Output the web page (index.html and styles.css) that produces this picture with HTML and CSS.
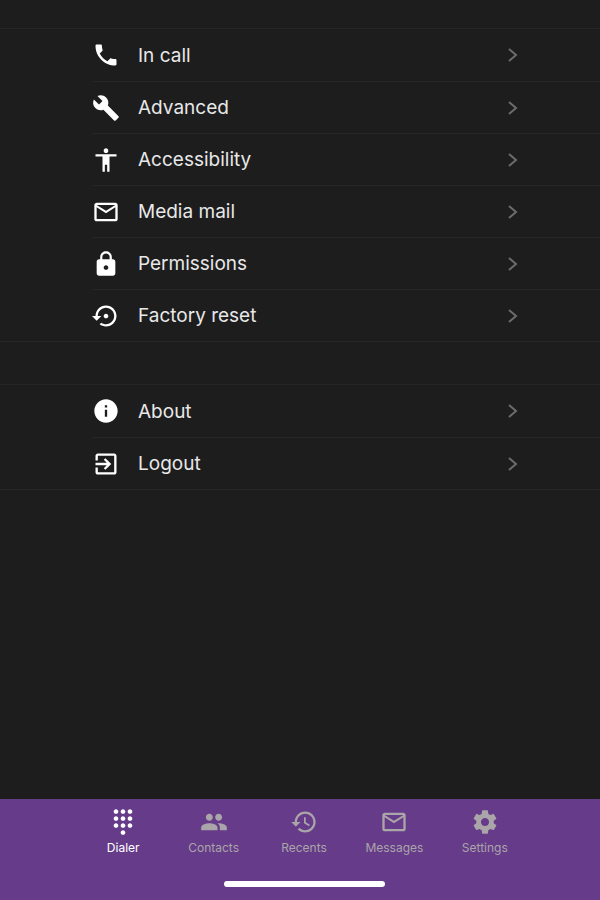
FILE: index.html
```html
<!DOCTYPE html>
<html lang="en">
<head>
    <meta charset="UTF-8">
    <meta name="viewport" content="width=device-width, initial-scale=1.0">
    <title>Settings</title>
    <link rel="stylesheet" href="styles.css">
</head>
<body>
    <main class="settings">
        <ul class="menu-group">
            <li><a class="menu-link" href="#in-call">
                <svg class="icon" viewBox="0 0 24 24"><path d="M6.62 10.79c1.44 2.83 3.76 5.14 6.59 6.59l2.2-2.2c.27-.27.67-.36 1.02-.24 1.12.37 2.33.57 3.57.57.55 0 1 .45 1 1V20c0 .55-.45 1-1 1-9.39 0-17-7.61-17-17 0-.55.45-1 1-1h3.5c.55 0 1 .45 1 1 0 1.25.2 2.45.57 3.57.11.35.03.74-.25 1.02l-2.2 2.2z"/></svg>
                <span class="menu-row">In call <svg class="chevron" viewBox="0 0 10 16"><path d="M1 2l7 6-7 6"/></svg></span>
            </a></li>
            <li><a class="menu-link" href="#advanced">
                <svg class="icon" viewBox="0 0 24 24"><path d="M22.7 19l-9.1-9.1c.9-2.3.4-5-1.5-6.9-2-2-5-2.4-7.4-1.3L9 6 6 9 1.6 4.7C.4 7.1.9 10.1 2.9 12.1c1.9 1.9 4.6 2.4 6.9 1.5l9.1 9.1c.4.4 1 .4 1.4 0l2.3-2.3c.5-.4.5-1.1.1-1.4z"/></svg>
                <span class="menu-row">Advanced <svg class="chevron" viewBox="0 0 10 16"><path d="M1 2l7 6-7 6"/></svg></span>
            </a></li>
            <li><a class="menu-link" href="#accessibility">
                <svg class="icon" viewBox="0 0 24 24"><path d="M12 2c1.1 0 2 .9 2 2s-.9 2-2 2-2-.9-2-2 .9-2 2-2zm9 7h-6v13h-2v-6h-2v6H9V9H3V7h18v2z"/></svg>
                <span class="menu-row">Accessibility <svg class="chevron" viewBox="0 0 10 16"><path d="M1 2l7 6-7 6"/></svg></span>
            </a></li>
            <li><a class="menu-link" href="#media-mail">
                <svg class="icon" viewBox="0 0 24 24"><path d="M20 4H4c-1.1 0-2 .9-2 2v12c0 1.1.9 2 2 2h16c1.1 0 2-.9 2-2V6c0-1.1-.9-2-2-2zm0 14H4V8l8 5 8-5v10zm-8-7L4 6h16l-8 5z"/></svg>
                <span class="menu-row">Media mail <svg class="chevron" viewBox="0 0 10 16"><path d="M1 2l7 6-7 6"/></svg></span>
            </a></li>
            <li><a class="menu-link" href="#permissions">
                <svg class="icon" viewBox="0 0 24 24"><path d="M18 8h-1V6c0-2.76-2.24-5-5-5S7 3.24 7 6v2H6c-1.1 0-2 .9-2 2v10c0 1.1.9 2 2 2h12c1.1 0 2-.9 2-2V10c0-1.1-.9-2-2-2zm-6 9c-1.1 0-2-.9-2-2s.9-2 2-2 2 .9 2 2-.9 2-2 2zm3.1-9H8.9V6c0-1.71 1.39-3.1 3.1-3.1 1.71 0 3.1 1.39 3.1 3.1v2z"/></svg>
                <span class="menu-row">Permissions <svg class="chevron" viewBox="0 0 10 16"><path d="M1 2l7 6-7 6"/></svg></span>
            </a></li>
            <li><a class="menu-link" href="#factory-reset">
                <svg class="icon" viewBox="0 0 24 24"><path d="M14 12c0-1.1-.9-2-2-2s-2 .9-2 2 .9 2 2 2 2-.9 2-2zm-2-9c-4.97 0-9 4.03-9 9H0l4 4 4-4H5c0-3.87 3.13-7 7-7s7 3.13 7 7-3.13 7-7 7c-1.51 0-2.91-.49-4.06-1.3l-1.42 1.44C8.04 20.3 9.94 21 12 21c4.97 0 9-4.03 9-9s-4.03-9-9-9z"/></svg>
                <span class="menu-row">Factory reset <svg class="chevron" viewBox="0 0 10 16"><path d="M1 2l7 6-7 6"/></svg></span>
            </a></li>
        </ul>

        <ul class="menu-group">
            <li><a class="menu-link" href="#about">
                <svg class="icon" viewBox="0 0 24 24"><path d="M12 2C6.48 2 2 6.48 2 12s4.48 10 10 10 10-4.48 10-10S17.52 2 12 2zm1 15h-2v-6h2v6zm0-8h-2V7h2v2z"/></svg>
                <span class="menu-row">About <svg class="chevron" viewBox="0 0 10 16"><path d="M1 2l7 6-7 6"/></svg></span>
            </a></li>
            <li><a class="menu-link" href="#logout">
                <svg class="icon" viewBox="0 0 24 24"><path d="M10.09 15.59L11.5 17l5-5-5-5-1.41 1.41L12.67 11H3v2h9.67l-2.58 2.59zM19 3H5c-1.11 0-2 .9-2 2v4h2V5h14v14H5v-4H3v4c0 1.1.89 2 2 2h14c1.1 0 2-.9 2-2V5c0-1.1-.9-2-2-2z"/></svg>
                <span class="menu-row">Logout <svg class="chevron" viewBox="0 0 10 16"><path d="M1 2l7 6-7 6"/></svg></span>
            </a></li>
        </ul>
    </main>

    <footer class="bottom-bar">
        <nav class="tabs">
            <a class="tab active" href="#dialer">
                <svg class="tab-icon" viewBox="0 0 24 24"><path d="M12 19c-1.1 0-2 .9-2 2s.9 2 2 2 2-.9 2-2-.9-2-2-2zM6 1c-1.1 0-2 .9-2 2s.9 2 2 2 2-.9 2-2-.9-2-2-2zm0 6c-1.1 0-2 .9-2 2s.9 2 2 2 2-.9 2-2-.9-2-2-2zm0 6c-1.1 0-2 .9-2 2s.9 2 2 2 2-.9 2-2-.9-2-2-2zm12-8c1.1 0 2-.9 2-2s-.9-2-2-2-2 .9-2 2 .9 2 2 2zm-6 8c-1.1 0-2 .9-2 2s.9 2 2 2 2-.9 2-2-.9-2-2-2zm6 0c-1.1 0-2 .9-2 2s.9 2 2 2 2-.9 2-2-.9-2-2-2zm0-6c-1.1 0-2 .9-2 2s.9 2 2 2 2-.9 2-2-.9-2-2-2zm-6 0c-1.1 0-2 .9-2 2s.9 2 2 2 2-.9 2-2-.9-2-2-2zm0-6c-1.1 0-2 .9-2 2s.9 2 2 2 2-.9 2-2-.9-2-2-2z"/></svg>
                Dialer
            </a>
            <a class="tab" href="#contacts">
                <svg class="tab-icon" viewBox="0 0 24 24"><path d="M16 11c1.66 0 2.99-1.34 2.99-3S17.66 5 16 5c-1.66 0-3 1.34-3 3s1.34 3 3 3zm-8 0c1.66 0 2.99-1.34 2.99-3S9.66 5 8 5C6.34 5 5 6.34 5 8s1.34 3 3 3zm0 2c-2.33 0-7 1.17-7 3.5V19h14v-2.5c0-2.33-4.67-3.5-7-3.5zm8 0c-.29 0-.62.02-.97.05 1.16.84 1.97 1.97 1.97 3.45V19h6v-2.5c0-2.33-4.67-3.5-7-3.5z"/></svg>
                Contacts
            </a>
            <a class="tab" href="#recents">
                <svg class="tab-icon" viewBox="0 0 24 24"><path d="M13 3c-4.97 0-9 4.03-9 9H1l3.89 3.89.07.14L9 12H6c0-3.87 3.13-7 7-7s7 3.13 7 7-3.13 7-7 7c-1.93 0-3.68-.79-4.94-2.06l-1.42 1.42C8.27 19.99 10.51 21 13 21c4.97 0 9-4.03 9-9s-4.03-9-9-9zm-1 5v5l4.28 2.54.72-1.21-3.5-2.08V8H12z"/></svg>
                Recents
            </a>
            <a class="tab" href="#messages">
                <svg class="tab-icon" viewBox="0 0 24 24"><path d="M20 4H4c-1.1 0-2 .9-2 2v12c0 1.1.9 2 2 2h16c1.1 0 2-.9 2-2V6c0-1.1-.9-2-2-2zm0 14H4V8l8 5 8-5v10zm-8-7L4 6h16l-8 5z"/></svg>
                Messages
            </a>
            <a class="tab" href="#settings">
                <svg class="tab-icon" viewBox="0 0 24 24"><path d="M19.43 12.98c.04-.32.07-.64.07-.98s-.03-.66-.07-.98l2.11-1.65c.19-.15.24-.42.12-.64l-2-3.46c-.12-.22-.39-.3-.61-.22l-2.49 1c-.52-.4-1.08-.73-1.69-.98l-.38-2.65C14.46 2.18 14.25 2 14 2h-4c-.25 0-.46.18-.49.42l-.38 2.65c-.61.25-1.17.59-1.69.98l-2.49-1c-.23-.09-.49 0-.61.22l-2 3.46c-.13.22-.07.49.12.64l2.11 1.65c-.04.32-.07.65-.07.98s.03.66.07.98l-2.11 1.65c-.19.15-.24.42-.12.64l2 3.46c.12.22.39.3.61.22l2.49-1c.52.4 1.08.73 1.69.98l.38 2.65c.03.24.24.42.49.42h4c.25 0 .46-.18.49-.42l.38-2.65c.61-.25 1.17-.59 1.69-.98l2.49 1c.23.09.49 0 .61-.22l2-3.46c.12-.22.07-.49-.12-.64l-2.11-1.65zM12 15.5c-1.93 0-3.5-1.57-3.5-3.5s1.57-3.5 3.5-3.5 3.5 1.57 3.5 3.5-1.57 3.5-3.5 3.5z"/></svg>
                Settings
            </a>
        </nav>
        <div class="home-indicator"></div>
    </footer>
</body>
</html>
```

FILE: styles.css
```css
/* Base Styles */
:root {
    --background: #1d1d1e;
    --line: #262628;
    --bar-color: #663b8a;
    --tab-color: #aaa5a8;
}

* {
    box-sizing: border-box;
}

body {
    display: flex;
    flex-direction: column;
    min-height: 100vh;
    margin: 0;
    background-color: var(--background);
    color: #e8e8e8;
    font-family: Inter, "Liberation Sans", sans-serif;
}

a {
    color: inherit;
    text-decoration: none;
}

/* Settings Menu */
.settings {
    flex: 1;
    display: flex;
    flex-direction: column;
    gap: 42px;
    padding: 28px 0;
}

.menu-group {
    list-style: none;
    margin: 0;
    padding: 0;
    border-top: 1px solid var(--line);
    border-bottom: 1px solid var(--line);
}

.menu-link {
    display: flex;
    align-items: center;
    gap: 18px;
    margin-left: 92px;
    height: 52px;
    font-size: 19px;
}

li + li .menu-link {
    border-top: 1px solid var(--line);
}

.icon {
    width: 28px;
    height: 28px;
    fill: #fff;
}

.menu-row {
    flex: 1;
    display: flex;
    justify-content: space-between;
    align-items: center;
    padding-right: 82px;
}

.chevron {
    width: 10px;
    height: 16px;
    fill: none;
    stroke: #6c6c6f;
    stroke-width: 2;
}

/* Bottom Bar */
.bottom-bar {
    display: flex;
    flex-direction: column;
    gap: 25px;
    padding: 9px 70px 13px 78px;
    background-color: var(--bar-color);
}

.tabs {
    display: flex;
}

.tab {
    flex: 1;
    display: flex;
    flex-direction: column;
    align-items: center;
    gap: 4px;
    color: var(--tab-color);
    font-size: 12px;
    line-height: 16px;
}

.tab.active {
    color: #fff;
}

.tab-icon {
    width: 28px;
    height: 28px;
    fill: currentColor;
}

.home-indicator {
    align-self: center;
    width: 161px;
    height: 6px;
    border-radius: 3px;
    background-color: #fff;
}
```
